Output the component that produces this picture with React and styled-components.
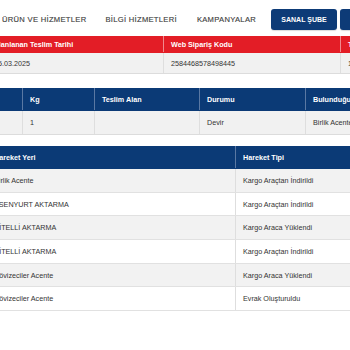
import React from "react";
import styled, { createGlobalStyle } from "styled-components";

const Global = createGlobalStyle`
  html, body { margin: 0; padding: 0; background: #fff; overflow: hidden; }
  body { font-family: "Liberation Sans", Arial, sans-serif; }
`;

const Page = styled.div`
  margin-left: -13px;
  width: 520px;
`;

const Nav = styled.nav`
  height: 36px;
  display: flex;
  align-items: center;
  padding-left: 15px;
  padding-top: 3px;
  box-sizing: border-box;
`;

const NavLink = styled.span`
  font-size: 7.6px;
  letter-spacing: 0.3px;
  color: #3f3f3f;
  -webkit-text-stroke: 0.15px #3f3f3f;
  white-space: nowrap;
  margin-right: ${(p) => p.$gap}px;
`;

const NavButton = styled.span`
  display: inline-flex;
  align-items: center;
  justify-content: center;
  width: ${(p) => p.$w}px;
  height: 21px;
  background: #0d3b77;
  color: #fff;
  font-weight: bold;
  font-size: 7px;
  border-radius: 3px;
  margin-right: 3px;
  white-space: nowrap;
  box-shadow: 0 1px 1px rgba(0,0,0,0.15);
`;

const Table = styled.div`
  margin-top: ${(p) => p.$mt || 0}px;
`;

const Row = styled.div`
  display: grid;
  grid-template-columns: ${(p) => p.$cols};
  height: ${(p) => p.$h}px;
  background: ${(p) => p.$bg};
  border-bottom: 1px solid ${(p) => p.$line};
  box-sizing: border-box;
`;

const HeadCell = styled.div`
  display: flex;
  align-items: center;
  padding-left: 7px;
  font-size: 7.2px;
  font-weight: bold;
  color: #fff;
  white-space: nowrap;
  overflow: hidden;
  border-right: 1px solid ${(p) => p.$line};
`;

const Cell = styled.div`
  display: flex;
  align-items: center;
  padding-left: 7px;
  font-size: 7.2px;
  color: #333;
  white-space: nowrap;
  overflow: hidden;
  border-right: 1px solid #dedede;
`;

const RED = "#e31d26";
const NAVY = "#0b3a76";

const t1 = "177px 177px 200px";
const t2 = "36px 72px 105px 106px 200px";
const t3 = "249px 260px";

const moves = [
  ["Birlik Acente", "Kargo Araçtan İndirildi"],
  ["ESENYURT AKTARMA", "Kargo Araçtan İndirildi"],
  ["ÇİTELLİ AKTARMA", "Kargo Araca Yüklendi"],
  ["ÇİTELLİ AKTARMA", "Kargo Araçtan İndirildi"],
  ["Dövizeciler Acente", "Kargo Araca Yüklendi"],
  ["Dövizeciler Acente", "Evrak Oluşturuldu"],
];

export default function App() {
  return (
    <>
      <Global />
      <Page>
        <Nav>
          <NavLink $gap={19}>ÜRÜN VE HİZMETLER</NavLink>
          <NavLink $gap={20}>BİLGİ HİZMETLERİ</NavLink>
          <NavLink $gap={15}>KAMPANYALAR</NavLink>
          <NavButton $w={66}>SANAL ŞUBE</NavButton>
          <NavButton $w={70}>KURUMSAL</NavButton>
        </Nav>

        <Table>
          <Row $cols={t1} $h={17} $bg={RED} $line={RED}>
            <HeadCell $line="#f08a8e">Planlanan Teslim Tarihi</HeadCell>
            <HeadCell $line="#f08a8e">Web Sipariş Kodu</HeadCell>
            <HeadCell $line="transparent">Teslim</HeadCell>
          </Row>
          <Row $cols={t1} $h={21} $bg="#f1f1f1" $line="#dcdcdc">
            <Cell>25.03.2025</Cell>
            <Cell>2584468578498445</Cell>
            <Cell>1</Cell>
          </Row>
        </Table>

        <Table $mt={14}>
          <Row $cols={t2} $h={23} $bg={NAVY} $line={NAVY}>
            <HeadCell $line="#5a78a3"></HeadCell>
            <HeadCell $line="#5a78a3">Kg</HeadCell>
            <HeadCell $line="#5a78a3">Teslim Alan</HeadCell>
            <HeadCell $line="#5a78a3">Durumu</HeadCell>
            <HeadCell $line="transparent">Bulunduğu Yer</HeadCell>
          </Row>
          <Row $cols={t2} $h={24} $bg="#f1f1f1" $line="#dcdcdc">
            <Cell></Cell>
            <Cell>1</Cell>
            <Cell></Cell>
            <Cell>Devir</Cell>
            <Cell>Birlik Acente</Cell>
          </Row>
        </Table>

        <Table $mt={11}>
          <Row $cols={t3} $h={23} $bg={NAVY} $line={NAVY}>
            <HeadCell $line="#5a78a3">Hareket Yeri</HeadCell>
            <HeadCell $line="transparent">Hareket Tipi</HeadCell>
          </Row>
          {moves.map(([yer, tip], i) => (
            <Row
              key={i}
              $cols={t3}
              $h={23.7}
              $bg={i % 2 === 0 ? "#f2f2f2" : "#ffffff"}
              $line="#e1e1e1"
            >
              <Cell>{yer}</Cell>
              <Cell>{tip}</Cell>
            </Row>
          ))}
        </Table>
      </Page>
    </>
  );
}
